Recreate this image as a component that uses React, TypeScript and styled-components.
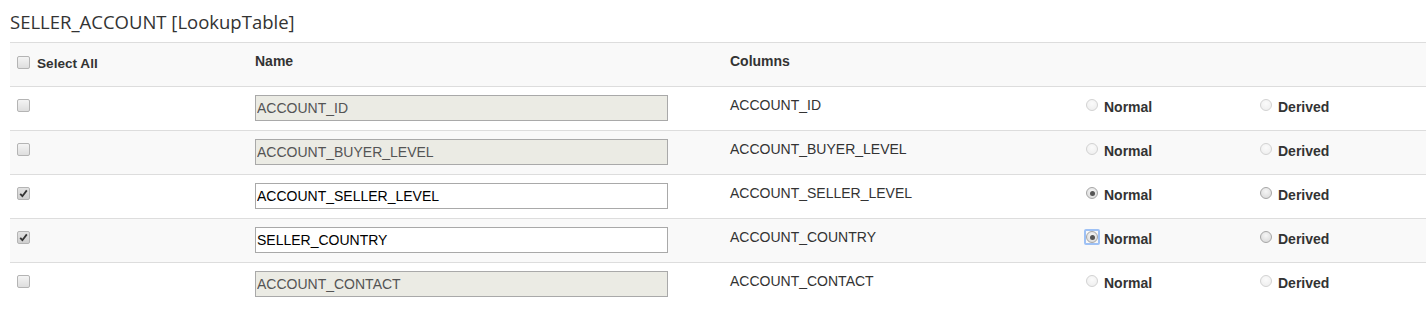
import React from "react";
import styled, { createGlobalStyle, css } from "styled-components";

const Global = createGlobalStyle`
  html, body { margin: 0; padding: 0; background: #fff; }
  body { font-family: "Liberation Sans", Arial, sans-serif; font-size: 14px; color: #333; }
`;

const Page = styled.div`
  padding: 0 0 0 10px;
`;

const Title = styled.h3`
  margin: 0;
  padding: 8px 0 7px 0;
  height: 27px;
  font-family: "Open Sans", "Segoe UI", sans-serif;
  font-weight: 400;
  font-size: 18.5px;
  line-height: 27px;
  color: #333;
`;

const COLS = "237px 475px 356px 174px 174px";

const Row = styled.div<{ $striped?: boolean; $header?: boolean }>`
  display: grid;
  grid-template-columns: ${COLS};
  height: 43px;
  border-top: 1px solid #ddd;
  background: ${(p) => (p.$striped ? "#f9f9f9" : "#fff")};
  ${(p) =>
    p.$header &&
    css`
      border-bottom: 1px solid #ddd;
      height: 43px;
    `}
`;

const Table = styled.div`
  display: flex;
  flex-direction: column;
  & > ${Row}:nth-child(2) { border-top: none; }
`;

const Cell = styled.div`
  padding: 8px 8px 0 8px;
  line-height: 20px;
  display: flex;
  align-items: flex-start;
  white-space: nowrap;
`;

const HeadText = styled.span`
  font-weight: bold;
  font-size: 14px;
`;

const Box = styled.span<{ $checked?: boolean }>`
  box-sizing: border-box;
  display: inline-flex;
  align-items: center;
  justify-content: center;
  width: 13px;
  height: 13px;
  margin: 4px 0 0 -1px;
  border: 1px solid #b4b4b4;
  border-radius: 2px;
  background: ${(p) =>
    p.$checked
      ? "linear-gradient(#e2e2e2, #cfcfcf)"
      : "linear-gradient(#f4f4f4, #dedede)"};
`;

const Check = () => (
  <svg width="9" height="9" viewBox="0 0 9 9">
    <path d="M1.2 4.8 L3.4 7.2 L7.8 1.4" fill="none" stroke="#333" strokeWidth="1.8" />
  </svg>
);

const CheckLabel = styled.label`
  display: inline-flex;
  align-items: flex-start;
  gap: 7px;
  font-weight: bold;
  font-size: 13.6px;
  & > span:last-child { padding-top: 3px; }
  & > ${Box} { margin-top: 5px; }
`;

const NameInput = styled.input<{ disabled?: boolean }>`
  box-sizing: border-box;
  width: 413px;
  height: 26px;
  padding: 1px 1px;
  margin: 0;
  border: 1px solid #a9a9a9;
  border-radius: 0;
  font-family: "Liberation Sans", Arial, sans-serif;
  font-size: 14px;
  color: #000;
  background: #fff;
  outline: none;
  &:disabled {
    background: #ebebe4;
    color: #545454;
  }
`;

const RadioWrap = styled.span<{ $focus?: boolean }>`
  display: inline-flex;
  align-items: center;
  justify-content: center;
  width: 12px;
  height: 12px;
  margin-top: 4px;
  position: relative;
  ${(p) =>
    p.$focus &&
    css`
      &::before {
        content: "";
        position: absolute;
        left: -2px;
        top: -2px;
        width: 16px;
        height: 16px;
        box-sizing: border-box;
        border: 2px solid #9ec1f5;
        border-radius: 2px;
      }
    `}
`;

const RadioDot = styled.span<{ $enabled?: boolean; $checked?: boolean }>`
  box-sizing: border-box;
  width: 12px;
  height: 12px;
  border-radius: 50%;
  border: 1px solid ${(p) => (p.$enabled ? "#a6a6a6" : "#d2d2d2")};
  background: ${(p) =>
    p.$enabled
      ? "radial-gradient(circle at 50% 35%, #f6f6f6, #d6d6d6)"
      : "radial-gradient(circle at 50% 35%, #fbfbfb, #ececec)"};
  display: flex;
  align-items: center;
  justify-content: center;
  position: relative;
  &::after {
    content: "";
    display: ${(p) => (p.$checked ? "block" : "none")};
    width: 5px;
    height: 5px;
    border-radius: 50%;
    background: #555;
  }
`;

const RadioLabel = styled.label`
  display: inline-flex;
  align-items: flex-start;
  gap: 6px;
  font-weight: bold;
  font-size: 14px;
  & > span:last-child { padding-top: 2px; }
`;

type R = {
  checked: boolean;
  name: string;
  column: string;
  normal: boolean;
  focus?: boolean;
};

const rows: R[] = [
  { checked: false, name: "ACCOUNT_ID", column: "ACCOUNT_ID", normal: false },
  { checked: false, name: "ACCOUNT_BUYER_LEVEL", column: "ACCOUNT_BUYER_LEVEL", normal: false },
  { checked: true, name: "ACCOUNT_SELLER_LEVEL", column: "ACCOUNT_SELLER_LEVEL", normal: true },
  { checked: true, name: "SELLER_COUNTRY", column: "ACCOUNT_COUNTRY", normal: true, focus: true },
  { checked: false, name: "ACCOUNT_CONTACT", column: "ACCOUNT_CONTACT", normal: false },
];

export default function App() {
  return (
    <Page>
      <Global />
      <Title>SELLER_ACCOUNT [LookupTable]</Title>
      <Table>
        <Row $header $striped>
          <Cell>
            <CheckLabel>
              <Box />
              <span>Select All</span>
            </CheckLabel>
          </Cell>
          <Cell>
            <HeadText>Name</HeadText>
          </Cell>
          <Cell>
            <HeadText>Columns</HeadText>
          </Cell>
          <Cell />
          <Cell />
        </Row>
        {rows.map((r, i) => (
          <Row key={r.column} $striped={i % 2 === 1}>
            <Cell>
              <Box $checked={r.checked}>{r.checked && <Check />}</Box>
            </Cell>
            <Cell>
              <NameInput defaultValue={r.name} disabled={!r.checked} />
            </Cell>
            <Cell>{r.column}</Cell>
            <Cell>
              <RadioLabel>
                <RadioWrap $focus={r.focus}>
                  <RadioDot $enabled={r.checked} $checked={r.normal} />
                </RadioWrap>
                <span>Normal</span>
              </RadioLabel>
            </Cell>
            <Cell>
              <RadioLabel>
                <RadioWrap>
                  <RadioDot $enabled={r.checked} />
                </RadioWrap>
                <span>Derived</span>
              </RadioLabel>
            </Cell>
          </Row>
        ))}
      </Table>
    </Page>
  );
}
